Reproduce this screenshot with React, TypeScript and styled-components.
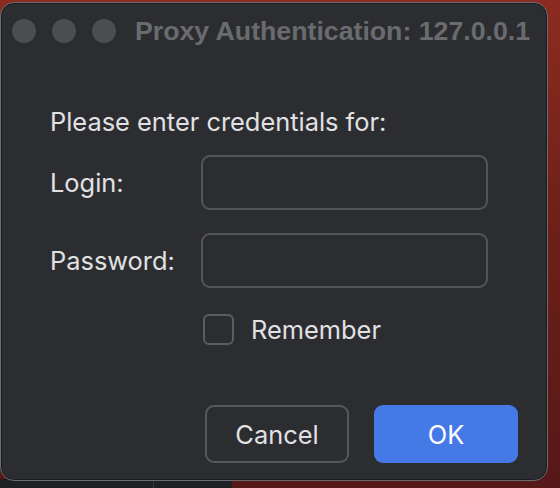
import type { FC } from "react";
import styled, { createGlobalStyle } from "styled-components";

const GlobalStyle = createGlobalStyle`
  html, body {
    margin: 0;
    padding: 0;
    width: 560px;
    height: 488px;
    overflow: hidden;
  }
  body {
    font-family: "Inter", "Noto Sans", sans-serif;
    -webkit-font-smoothing: antialiased;
  }
`;

// desktop behind the dialog: red wallpaper, a dark app strip peeking at the bottom
const Desktop = styled.div`
  width: 560px;
  height: 488px;
  box-sizing: border-box;
  padding-top: 2px;
  background:
    linear-gradient(
        to right,
        #1f2023 0 153px,
        #3a3b3f 153px 154px,
        #1f2023 154px 232px,
        transparent 232px
      )
      left bottom / 100% 9px no-repeat,
    linear-gradient(180deg, #8c2b21 0%, #6e2019 45%, #561818 100%);
`;

const Window = styled.div`
  width: 548px;
  height: 479px;
  box-sizing: border-box;
  border: 1px solid #6c6d71;
  border-radius: 14px;
  background: #2c2d31;
  box-shadow: inset 0 0 0 1px #1b1c1f;
  display: flex;
  flex-direction: column;
`;

const TitleBar = styled.div`
  height: 60px;
  box-sizing: border-box;
  padding: 0 0 4px 11px;
  display: flex;
  align-items: center;
`;

const Lights = styled.div`
  display: flex;
  gap: 16px;
  margin-right: 19px;
`;

const Light = styled.span`
  width: 24px;
  height: 24px;
  border-radius: 50%;
  background: #4c4d51;
`;

const Title = styled.div`
  font-family: "Liberation Sans", "Inter", sans-serif;
  font-weight: 700;
  font-size: 26.7px;
  line-height: 30px;
  color: #6a6b6f;
  white-space: nowrap;
`;

const Body = styled.div`
  flex: 1;
  display: flex;
  flex-direction: column;
  padding: 44px 29px 17px 49px;
`;

const Prompt = styled.div`
  font-size: 25.4px;
  line-height: 30px;
  color: #e1e1e3;
`;

const Form = styled.div`
  margin-top: 18px;
  display: grid;
  grid-template-columns: 151px 287px;
  row-gap: 23px;
  align-items: center;
`;

const Label = styled.label`
  font-size: 25.4px;
  line-height: 30px;
  color: #e1e1e3;
`;

const Field = styled.input`
  width: 287px;
  height: 55px;
  box-sizing: border-box;
  border: 2px solid #545559;
  border-radius: 9px;
  background: #2c2d31;
  outline: none;
  color: #e1e1e3;
  font: inherit;
  font-size: 22px;
  padding: 0 12px;
`;

const CheckRow = styled.div`
  grid-column: 2;
  margin-top: 3px;
  margin-left: 2px;
  display: flex;
  align-items: center;
  gap: 17px;
`;

const Box = styled.span`
  width: 31px;
  height: 31px;
  box-sizing: border-box;
  border: 2px solid #5c5d61;
  border-radius: 6px;
`;

const CheckText = styled.span`
  font-size: 25.4px;
  line-height: 30px;
  color: #e1e1e3;
`;

const Actions = styled.div`
  margin-top: auto;
  display: flex;
  justify-content: flex-end;
  gap: 25px;
`;

const Button = styled.button<{ $primary?: boolean }>`
  width: 144px;
  height: 58px;
  box-sizing: border-box;
  border-radius: 9px;
  border: ${(p) => (p.$primary ? "none" : "2px solid #57585c")};
  background: ${(p) => (p.$primary ? "#4479e6" : "transparent")};
  color: ${(p) => (p.$primary ? "#ffffff" : "#e1e1e3")};
  font-family: "Inter", "Noto Sans", sans-serif;
  font-size: 25.4px;
  padding: 0;
  cursor: pointer;
`;

const App: FC = () => {
  return (
    <>
      <GlobalStyle />
      <Desktop>
        <Window>
          <TitleBar>
            <Lights>
              <Light />
              <Light />
              <Light />
            </Lights>
            <Title>Proxy Authentication: 127.0.0.1</Title>
          </TitleBar>
          <Body>
            <Prompt>Please enter credentials for:</Prompt>
            <Form>
              <Label htmlFor="login">Login:</Label>
              <Field id="login" type="text" />
              <Label htmlFor="password">Password:</Label>
              <Field id="password" type="password" />
              <CheckRow>
                <Box />
                <CheckText>Remember</CheckText>
              </CheckRow>
            </Form>
            <Actions>
              <Button>Cancel</Button>
              <Button $primary>OK</Button>
            </Actions>
          </Body>
        </Window>
      </Desktop>
    </>
  );
};

export default App;
